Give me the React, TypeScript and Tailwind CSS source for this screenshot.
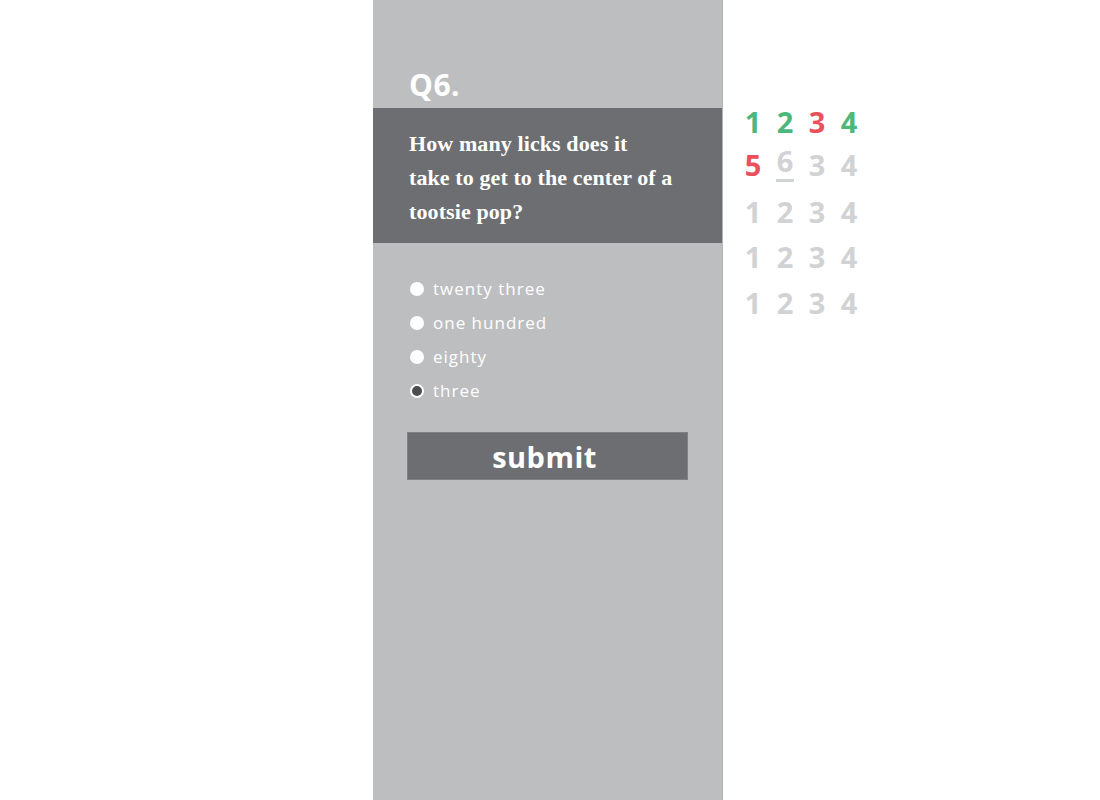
import React from "react";

const options = ["twenty three", "one hundred", "eighty", "three"];

type Cell = { n: string; tone: "green" | "red" | "gray" | "current" };

const rows: Cell[][] = [
  [
    { n: "1", tone: "green" },
    { n: "2", tone: "green" },
    { n: "3", tone: "red" },
    { n: "4", tone: "green" },
  ],
  [
    { n: "5", tone: "red" },
    { n: "6", tone: "current" },
    { n: "3", tone: "gray" },
    { n: "4", tone: "gray" },
  ],
  [
    { n: "1", tone: "gray" },
    { n: "2", tone: "gray" },
    { n: "3", tone: "gray" },
    { n: "4", tone: "gray" },
  ],
  [
    { n: "1", tone: "gray" },
    { n: "2", tone: "gray" },
    { n: "3", tone: "gray" },
    { n: "4", tone: "gray" },
  ],
  [
    { n: "1", tone: "gray" },
    { n: "2", tone: "gray" },
    { n: "3", tone: "gray" },
    { n: "4", tone: "gray" },
  ],
];

const rowGaps = ["mt-[100px]", "mt-[1px]", "mt-[5px]", "mt-[3px]", "mt-[4px]"];

function toneClass(tone: Cell["tone"]) {
  if (tone === "green") return "text-[#4cb87c]";
  if (tone === "red") return "text-[#e9505c]";
  return "text-[#d1d2d4]";
}

export default function App() {
  return (
    <main className="min-h-screen bg-white flex font-['Open_Sans',sans-serif]">
      <div className="w-[373px] shrink-0" />

      {/* Quiz panel */}
      <section className="w-[350px] h-[800px] shrink-0 bg-[#bdbec0] border-r border-[#b2b3b5] flex flex-col">
        <h2 className="pt-[69px] pl-[36px] text-[30px] leading-[32px] font-bold text-white tracking-[0.5px] mb-[7px]">
          Q6.
        </h2>

        <div className="bg-[#6d6e71] pt-[19px] pb-[14px] pl-[36px]">
          <p className="font-['Liberation_Serif',serif] font-bold text-white text-[22px] leading-[34px] whitespace-nowrap tracking-[0.1px]">
            How many licks does it
            <br />
            take to get to the center of a
            <br />
            tootsie pop?
          </p>
        </div>

        {/* Options */}
        <ul className="mt-[29px] pl-[37px] flex flex-col">
          {options.map((opt, i) => {
            const selected = i === options.length - 1;
            return (
              <li key={opt} className="h-[34px] flex items-center gap-[9px]">
                <span
                  className={
                    selected
                      ? "w-[14px] h-[14px] rounded-full bg-[#4d4d4f] border-[2px] border-white"
                      : "w-[14px] h-[14px] rounded-full bg-white"
                  }
                />
                <span className="text-white text-[17px] font-normal leading-none tracking-[1px] -mt-[2px]">
                  {opt}
                </span>
              </li>
            );
          })}
        </ul>

        <button className="mt-[24px] ml-[34px] w-[281px] h-[48px] pr-[6px] bg-[#6d6e71] border border-[#808184] text-white text-[29px] font-bold leading-none tracking-[0.5px]">
          submit
        </button>
      </section>

      {/* Progress grid */}
      <div className="ml-[14px] flex flex-col">
        {rows.map((row, r) => (
          <div key={r} className={`flex ${rowGaps[r]}`}>
            {row.map((c, i) => (
              <div
                key={i}
                className={`w-[32px] h-[42px] flex flex-col items-center justify-center text-[29px] font-bold leading-none ${toneClass(c.tone)}`}
              >
                <span>{c.n}</span>
                {c.tone === "current" && (
                  <span className="mt-[4px] w-[18px] h-[3px] bg-[#d1d2d4]" />
                )}
              </div>
            ))}
          </div>
        ))}
      </div>
    </main>
  );
}
